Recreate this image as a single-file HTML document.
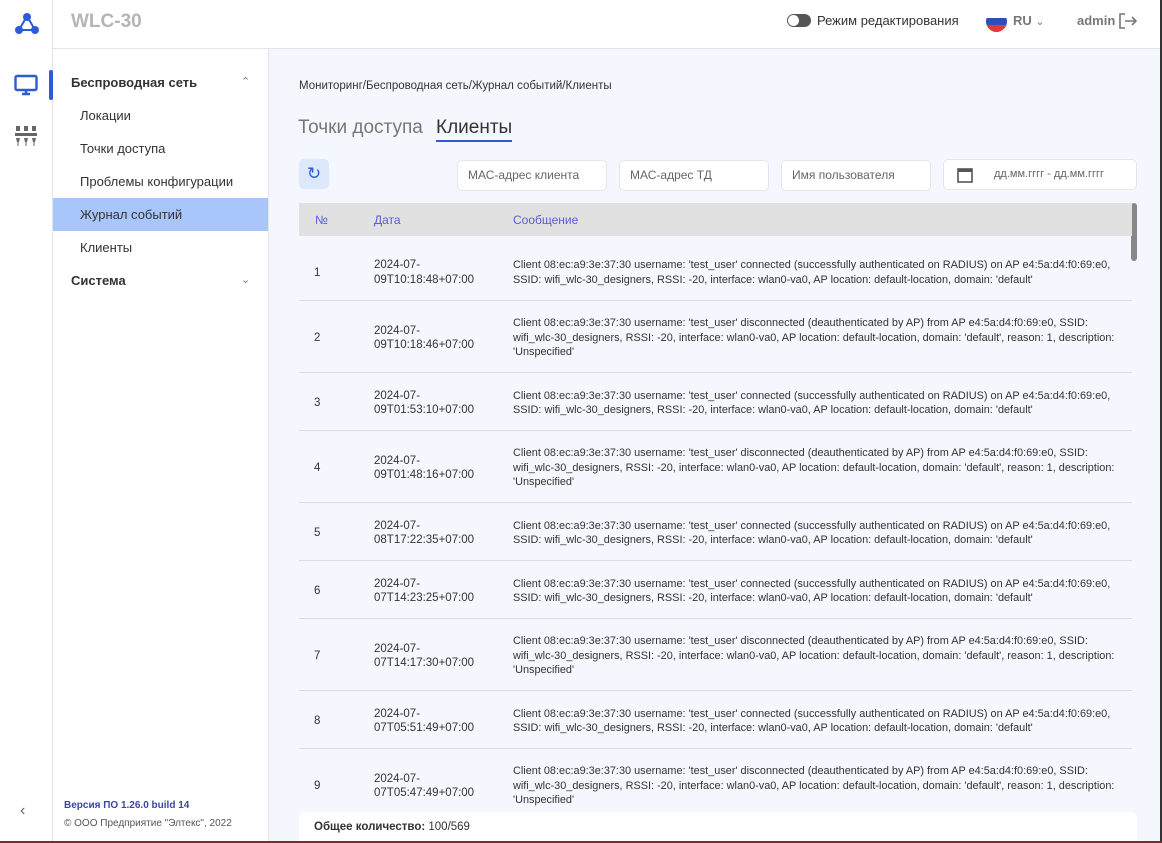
<!DOCTYPE html>
<html><head><meta charset="utf-8"><style>
*{box-sizing:border-box;margin:0;padding:0}
body{width:1162px;height:843px;overflow:hidden;font-family:"Liberation Sans",sans-serif;background:#f4f7fd;position:relative;color:#333}
.top{position:absolute;left:0;top:0;width:1162px;height:49px;background:#fff;border-bottom:1px solid #e2e4ea}
.rail{position:absolute;left:0;top:0;width:53px;height:843px;background:#fff;border-right:1px solid #e2e4ea}
.side{position:absolute;left:53px;top:49px;width:216px;height:794px;background:#fff;border-right:1px solid #e2e4ea}
.abs{position:absolute;white-space:nowrap}
.si{position:absolute;left:0;width:215px;height:33px;line-height:33px;padding-left:27px;font-size:13px;color:#333}
.inp{position:absolute;top:160px;height:31px;background:#fff;border:1px solid #e3e6ee;border-radius:5px;font-size:12px;color:#666;line-height:29px;padding-left:10px}
table{position:absolute;left:299px;top:203px;width:833px;border-collapse:collapse;font-size:11.5px;color:#333;table-layout:fixed}
th{background:#e1e1e1;height:33px;text-align:left;font-weight:normal;color:#5b5bd6;font-size:12px}
td{border-bottom:1px solid #dcdde2;vertical-align:middle;line-height:14.5px;white-space:nowrap;padding-top:4px}
td+td+td{font-size:10.9px}
</style></head><body>
<div class="top"></div>
<div class="rail"></div>
<div class="side"></div>
<svg class="abs" style="left:14px;top:12px" width="26" height="24" viewBox="0 0 26 24"><path d="M13 4 L5 18 L21 18 Z" stroke="#2d5bd6" stroke-width="2" fill="none"/><circle cx="13" cy="5" r="4" fill="#2d5bd6"/><circle cx="5" cy="18" r="4" fill="#2d5bd6"/><circle cx="21" cy="18" r="4" fill="#2d5bd6"/></svg>
<div class="abs" style="left:71px;top:11px;font-size:19px;font-weight:bold;color:#b5b5b5">WLC-30</div>
<div class="abs" style="left:787px;top:14px;width:24px;height:13px;border-radius:7px;background:#555"></div>
<div class="abs" style="left:788px;top:15px;width:11px;height:11px;border-radius:6px;background:#fff"></div>
<div class="abs" style="left:817px;top:13px;font-size:13px;color:#333">Режим редактирования</div>
<div class="abs" style="left:986px;top:11px;width:21px;height:21px;border-radius:50%;background:linear-gradient(#fff 0 33%,#2c4fb8 33% 66%,#e53935 66%)"></div>
<div class="abs" style="left:1013px;top:13px;font-size:13px;font-weight:bold;color:#777">RU <span style="font-weight:normal;font-size:11px">&#8964;</span></div>
<div class="abs" style="left:1077px;top:13px;font-size:13px;font-weight:bold;color:#777">admin</div>
<svg class="abs" style="left:1118px;top:12px" width="20" height="18" viewBox="0 0 20 18"><path d="M7 2H2v14h5M7 9h11M14 5l4 4-4 4" stroke="#777" stroke-width="1.6" fill="none"/></svg>
<svg class="abs" style="left:14px;top:74px" width="24" height="22" viewBox="0 0 24 22"><rect x="1.5" y="2" width="21" height="14" rx="1.5" stroke="#2d5bd6" stroke-width="2.4" fill="none"/><path d="M8 20h8M12 16v4" stroke="#2d5bd6" stroke-width="2.4"/></svg>
<div class="abs" style="left:49px;top:70px;width:4px;height:30px;background:#2d5bd6;border-radius:2px"></div>
<svg class="abs" style="left:14px;top:124px" width="24" height="24" viewBox="0 0 24 24" fill="#666"><rect x="2" y="2" width="4" height="5"/><rect x="10" y="2" width="4" height="5"/><rect x="18" y="2" width="4" height="5"/><rect x="1" y="9" width="22" height="3"/><path d="M2 14h4l-1 4H3zM10 14h4l-1 4h-2zM18 14h4l-1 4h-2z"/><rect x="3.5" y="18" width="1" height="4"/><rect x="11.5" y="18" width="1" height="4"/><rect x="19.5" y="18" width="1" height="4"/></svg>
<div class="abs" style="left:20px;top:802px;font-size:16px;color:#666">&#8249;</div>
<div class="abs" style="left:71px;top:75px;font-size:13px;font-weight:bold;color:#333">Беспроводная сеть</div>
<div class="abs" style="left:241px;top:75px;font-size:11px;color:#777">&#8963;</div>
<div class="si" style="left:53px;top:99px">Локации</div>
<div class="si" style="left:53px;top:132px">Точки доступа</div>
<div class="si" style="left:53px;top:165px">Проблемы конфигурации</div>
<div class="si" style="left:53px;top:198px;background:#a8c6fa">Журнал событий</div>
<div class="si" style="left:53px;top:231px">Клиенты</div>
<div class="abs" style="left:71px;top:273px;font-size:13px;font-weight:bold;color:#333">Система</div>
<div class="abs" style="left:241px;top:273px;font-size:11px;color:#777">&#8964;</div>
<div class="abs" style="left:64px;top:800px;font-size:10px;font-weight:bold;color:#3b45a8">Версия ПО 1.26.0 build 14</div>
<div class="abs" style="left:64px;top:818px;font-size:10px;color:#555">© ООО Предприятие "Элтекс", 2022</div>
<div class="abs" style="left:299px;top:80px;font-size:11.5px;color:#333">Мониторинг/Беспроводная сеть/Журнал событий/Клиенты</div>
<div class="abs" style="left:298px;top:117px;font-size:19px;color:#777">Точки доступа</div>
<div class="abs" style="left:436px;top:117px;font-size:19px;color:#333;border-bottom:2px solid #2d5bd6;padding-bottom:1px">Клиенты</div>
<div class="abs" style="left:299px;top:159px;width:30px;height:30px;border-radius:5px;background:#dde8fd;color:#2d5bd6;font-size:17px;text-align:center;line-height:30px">&#8635;</div>
<div class="inp" style="left:457px;width:150px">МАС-адрес клиента</div>
<div class="inp" style="left:619px;width:150px">МАС-адрес ТД</div>
<div class="inp" style="left:781px;width:150px">Имя пользователя</div>
<div class="inp" style="left:943px;top:159px;width:194px;padding-left:50px;font-size:11px">дд.мм.гггг - дд.мм.гггг</div>
<svg class="abs" style="left:956px;top:166px" width="18" height="18" viewBox="0 0 18 18"><rect x="2" y="3" width="14" height="13" stroke="#555" stroke-width="1.6" fill="none"/><rect x="2" y="3" width="14" height="3" fill="#555"/></svg>
<div class="abs" style="left:1131px;top:203px;width:6px;height:58px;background:#888;border-radius:3px"></div>
<div class="abs" style="left:1160px;top:0;width:2px;height:843px;background:#333"></div>
<table>
<colgroup><col style="width:75px"><col style="width:139px"><col></colgroup>
<tr><th style="padding-left:16px">№</th><th>Дата</th><th>Сообщение</th></tr>
<tr style="height:64px"><td style="padding-left:15px;padding-top:10px">1</td><td style="padding-top:10px">2024-07-<br>09T10:18:48+07:00</td><td style="padding-top:10px">Client 08:ec:a9:3e:37:30 username: 'test_user' connected (successfully authenticated on RADIUS) on AP e4:5a:d4:f0:69:e0,<br>SSID: wifi_wlc-30_designers, RSSI: -20, interface: wlan0-va0, AP location: default-location, domain: 'default'</td></tr>
<tr style="height:72px"><td style="padding-left:15px">2</td><td>2024-07-<br>09T10:18:46+07:00</td><td>Client 08:ec:a9:3e:37:30 username: 'test_user' disconnected (deauthenticated by AP) from AP e4:5a:d4:f0:69:e0, SSID:<br>wifi_wlc-30_designers, RSSI: -20, interface: wlan0-va0, AP location: default-location, domain: 'default', reason: 1, description:<br>'Unspecified'</td></tr>
<tr style="height:58px"><td style="padding-left:15px">3</td><td>2024-07-<br>09T01:53:10+07:00</td><td>Client 08:ec:a9:3e:37:30 username: 'test_user' connected (successfully authenticated on RADIUS) on AP e4:5a:d4:f0:69:e0,<br>SSID: wifi_wlc-30_designers, RSSI: -20, interface: wlan0-va0, AP location: default-location, domain: 'default'</td></tr>
<tr style="height:72px"><td style="padding-left:15px">4</td><td>2024-07-<br>09T01:48:16+07:00</td><td>Client 08:ec:a9:3e:37:30 username: 'test_user' disconnected (deauthenticated by AP) from AP e4:5a:d4:f0:69:e0, SSID:<br>wifi_wlc-30_designers, RSSI: -20, interface: wlan0-va0, AP location: default-location, domain: 'default', reason: 1, description:<br>'Unspecified'</td></tr>
<tr style="height:58px"><td style="padding-left:15px">5</td><td>2024-07-<br>08T17:22:35+07:00</td><td>Client 08:ec:a9:3e:37:30 username: 'test_user' connected (successfully authenticated on RADIUS) on AP e4:5a:d4:f0:69:e0,<br>SSID: wifi_wlc-30_designers, RSSI: -20, interface: wlan0-va0, AP location: default-location, domain: 'default'</td></tr>
<tr style="height:58px"><td style="padding-left:15px">6</td><td>2024-07-<br>07T14:23:25+07:00</td><td>Client 08:ec:a9:3e:37:30 username: 'test_user' connected (successfully authenticated on RADIUS) on AP e4:5a:d4:f0:69:e0,<br>SSID: wifi_wlc-30_designers, RSSI: -20, interface: wlan0-va0, AP location: default-location, domain: 'default'</td></tr>
<tr style="height:72px"><td style="padding-left:15px">7</td><td>2024-07-<br>07T14:17:30+07:00</td><td>Client 08:ec:a9:3e:37:30 username: 'test_user' disconnected (deauthenticated by AP) from AP e4:5a:d4:f0:69:e0, SSID:<br>wifi_wlc-30_designers, RSSI: -20, interface: wlan0-va0, AP location: default-location, domain: 'default', reason: 1, description:<br>'Unspecified'</td></tr>
<tr style="height:58px"><td style="padding-left:15px">8</td><td>2024-07-<br>07T05:51:49+07:00</td><td>Client 08:ec:a9:3e:37:30 username: 'test_user' connected (successfully authenticated on RADIUS) on AP e4:5a:d4:f0:69:e0,<br>SSID: wifi_wlc-30_designers, RSSI: -20, interface: wlan0-va0, AP location: default-location, domain: 'default'</td></tr>
<tr style="height:72px"><td style="padding-left:15px">9</td><td>2024-07-<br>07T05:47:49+07:00</td><td>Client 08:ec:a9:3e:37:30 username: 'test_user' disconnected (deauthenticated by AP) from AP e4:5a:d4:f0:69:e0, SSID:<br>wifi_wlc-30_designers, RSSI: -20, interface: wlan0-va0, AP location: default-location, domain: 'default', reason: 1, description:<br>'Unspecified'</td></tr>
</table>
<div class="abs" style="left:299px;top:812px;width:838px;height:31px;background:#fff;border-radius:6px 6px 0 0;font-size:11.5px;padding:9px 0 0 15px"><b>Общее количество:</b> 100/569</div>
<div class="abs" style="left:0;top:841px;width:1162px;height:2px;background:#7a2a30"></div>
</body></html>
